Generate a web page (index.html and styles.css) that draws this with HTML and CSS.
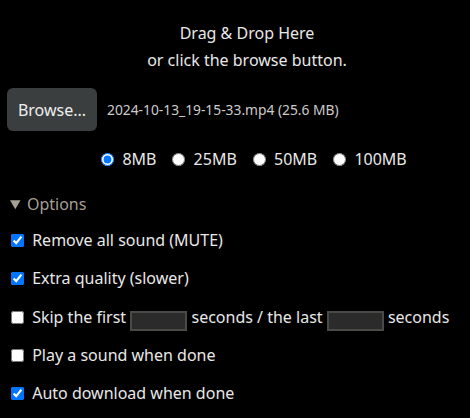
FILE: index.html
```html
<!DOCTYPE html>
<html lang="en">

<head>
  <meta charset="UTF-8">
  <meta name="viewport" content="width=device-width, initial-scale=1.0">
  <title>Compress Video</title>
  <link rel="stylesheet" href="styles.css">
</head>

<body>

  <div class="drop-zone">
    <p>Drag &amp; Drop Here</p>
    <p>or click the browse button.</p>
  </div>

  <div class="file-row">
    <button type="button" class="browse-btn">Browse...</button>
    <span class="file-name">2024-10-13_19-15-33.mp4 (25.6 MB)</span>
  </div>

  <div class="sizes">
    <label><input type="radio" name="size" value="8" checked> 8MB</label>
    <label><input type="radio" name="size" value="25"> 25MB</label>
    <label><input type="radio" name="size" value="50"> 50MB</label>
    <label><input type="radio" name="size" value="100"> 100MB</label>
  </div>

  <details class="options" open>
    <summary>Options</summary>

    <label class="option"><input type="checkbox" checked> Remove all sound (MUTE)</label>
    <label class="option"><input type="checkbox" checked> Extra quality (slower)</label>
    <label class="option"><input type="checkbox"> Skip the first <input type="text" class="secs"> seconds / the last <input type="text" class="secs"> seconds</label>
    <label class="option"><input type="checkbox"> Play a sound when done</label>
    <label class="option"><input type="checkbox" checked> Auto download when done</label>
  </details>

</body>

</html>
```

FILE: styles.css
```css
body {
  font-family: 'Noto Sans', 'Open Sans', sans-serif;
  background-color: #000;
  color: #e8e8e8;
  margin: 0;
  padding: 0;
  font-size: 16px;
}

.drop-zone {
  text-align: center;
  padding: 20px 0 0 24px;
  font-size: 16px;
}

.drop-zone p {
  margin: 0;
  line-height: 27px;
}

.file-row {
  display: flex;
  align-items: center;
  gap: 10px;
  margin: 14px 7px 0;
}

.browse-btn {
  width: 90px;
  height: 43px;
  background-color: #3b3e3f;
  color: #eee;
  border: none;
  border-radius: 6px;
  font-family: inherit;
  font-size: 16px;
  cursor: pointer;
}

.file-name {
  font-size: 13.8px;
  color: #ccc;
}

.sizes {
  display: flex;
  justify-content: center;
  gap: 16px;
  margin-top: 17px;
  padding-left: 38px;
}

.sizes input {
  margin: 0 4px 0 0;
  vertical-align: -1px;
}

.options {
  margin: 23px 10px 0;
}

.options summary {
  color: #a59f94;
  cursor: pointer;
  margin-bottom: 14px;
}

.option {
  display: block;
  height: 22px;
  line-height: 22px;
  margin-bottom: 16.3px;
}

.option input[type="checkbox"] {
  margin: 0 4px 0 1px;
  vertical-align: -1px;
}

.secs {
  width: 51px;
  height: 16px;
  background-color: #2b2b2b;
  border: 2px solid #4a4a46;
  padding: 0 1px;
  color: #eee;
  vertical-align: -3px;
}
```
